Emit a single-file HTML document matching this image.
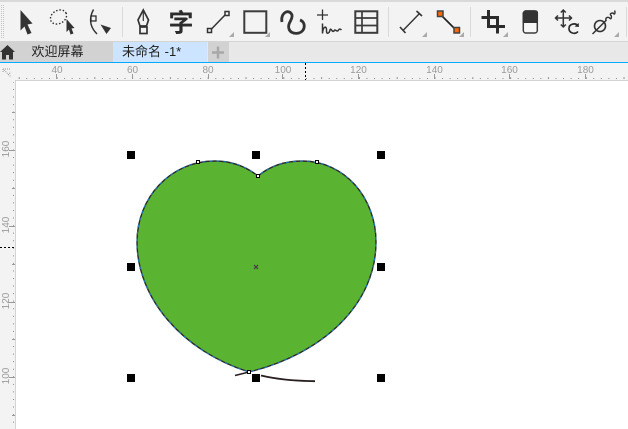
<!DOCTYPE html>
<html><head><meta charset="utf-8"><style>
html,body{margin:0;padding:0;background:#fff;width:628px;height:429px;overflow:hidden}
svg{display:block}
.r{font:10px "Liberation Sans",sans-serif;fill:#9a9a9a}
.t{font:13px "Liberation Sans","Noto Sans CJK SC",sans-serif;fill:#222}
</style></head><body>
<svg width="628" height="429" viewBox="0 0 628 429" xmlns="http://www.w3.org/2000/svg">
<rect width="628" height="429" fill="#fff"/>
<!-- toolbar -->
<rect width="628" height="42" fill="#f3f3f3"/>
<rect y="0" width="628" height="2" fill="#d9d9d9"/>
<rect y="41" width="628" height="1" fill="#d4d4d4"/>
<line x1="1.5" y1="5" x2="1.5" y2="38" stroke="#c4c4c4" stroke-dasharray="1 1"/>
<line x1="3.5" y1="5" x2="3.5" y2="38" stroke="#c4c4c4" stroke-dasharray="1 1"/>
<g fill="#dadada"><rect x="122" y="7" width="1" height="30"/><rect x="388" y="7" width="1" height="30"/><rect x="470" y="7" width="1" height="30"/><rect x="626" y="7" width="1" height="30"/></g>
<!-- pick -->
<path d="M20.500 10 L32.500 23.500 L27.500 24.500 L31.500 33 L27.500 34.500 L24.500 26.500 L20.500 30.500Z" fill="#333"/>
<!-- freehand pick -->
<ellipse cx="58.500" cy="17" rx="8.500" ry="6.500" transform="rotate(-30 58.500 17)" fill="none" stroke="#333" stroke-width="1.400" stroke-dasharray="1.500 1.800"/>
<path d="M66.500 19 L74.500 28 L71.500 28.500 L73.500 33.500 L70.500 34.500 L69 29.500 L66.500 32Z" fill="#333"/>
<!-- shape -->
<path d="M93.500 9.500 C91 14 90 19 91 24 C92 28 94 31 97 34" fill="none" stroke="#333" stroke-width="1.500"/>
<rect x="91" y="16" width="5" height="5" fill="#f3f3f3" stroke="#222" stroke-width="1.200"/>
<path d="M100.500 24.500 L111 28 L106.500 34Z" fill="#333"/>
<!-- pen -->
<path d="M143.300 10 L148.500 20 L146.500 26 L140 26 L138 20Z" fill="#f3f3f3" stroke="#333" stroke-width="1.700"/>
<line x1="143.300" y1="12" x2="143.300" y2="21" stroke="#333" stroke-width="1.200"/>
<rect x="140" y="27" width="7" height="6.500" fill="#f3f3f3" stroke="#333" stroke-width="1.700"/>
<!-- text icon -->
<text x="168.500" y="31.500" style="font:bold 25px 'Noto Sans CJK SC','WenQuanYi Zen Hei',sans-serif" fill="#2c2c2c">字</text>
<!-- line -->
<line x1="211" y1="29.500" x2="225.500" y2="14.500" stroke="#333" stroke-width="1.500"/>
<rect x="207.500" y="28.500" width="4" height="4" fill="#f3f3f3" stroke="#333" stroke-width="1.500"/>
<rect x="225" y="11.500" width="4" height="4" fill="#f3f3f3" stroke="#333" stroke-width="1.500"/>
<!-- rect -->
<rect x="244.300" y="11.300" width="22" height="21.500" fill="none" stroke="#3c3c3c" stroke-width="2"/>
<!-- spiral -->
<path d="M282 22 C280 13 289 8 292 15 C293 20 287 23 289 29 C291 35 302 35 304 28 C305 24 303 21 300 20" fill="none" stroke="#333" stroke-width="2.800"/>
<!-- artistic -->
<path d="M322.500 9.500 V20 M317 15 H328" stroke="#333" stroke-width="1.300" fill="none"/>
<path d="M322.500 23.500 V33.500 C323 26 327 25 326.500 31 C326.500 35 329.500 33 330 30 C331 27 332 33 334 31 C335 28 337 33 338.500 30 C339.500 28.500 340.500 29 341.500 30" fill="none" stroke="#333" stroke-width="1.500"/>
<!-- table -->
<rect x="355.300" y="11.300" width="22" height="21.500" fill="none" stroke="#3c3c3c" stroke-width="2"/>
<path d="M355 18 H377 M355 25.500 H377 M362 11 V33" stroke="#3c3c3c" stroke-width="1.700"/>
<!-- dimension -->
<path d="M403 30.500 L419.500 13.500" stroke="#333" stroke-width="1.400"/>
<path d="M400 27 L405.500 33 M416.500 11 L422 16" stroke="#333" stroke-width="1.600"/>
<!-- connector -->
<line x1="440" y1="14" x2="456" y2="30" stroke="#222" stroke-width="1.700"/>
<rect x="437.500" y="11" width="5.500" height="5.500" fill="#f60" stroke="#444" stroke-width="1.500"/>
<rect x="454" y="27.500" width="5.500" height="5.500" fill="#f60" stroke="#444" stroke-width="1.500"/>
<!-- crop -->
<path d="M488.500 10 V26.500 H505 M481.500 17.500 H497.500 V33.500" fill="none" stroke="#2c2c2c" stroke-width="3"/>
<!-- eraser -->
<rect x="523.300" y="11" width="14" height="22" rx="2.500" fill="#f6f6f6" stroke="#3c3c3c" stroke-width="1.500"/>
<path d="M522.500 23 V13 L525 10.300 H535 Q538 10.300 538 13 V23Z" fill="#333"/>
<!-- transform -->
<path d="M563.300 10 V27 M555.500 18 H571.500 M560.800 12.500 L563.300 10 L565.800 12.500 M558 15.500 L555.500 18 L558 20.500 M569 15.500 L571.500 18 L569 20.500 M560.800 24.500 L563.300 27 L565.800 24.500" fill="none" stroke="#333" stroke-width="1.500"/>
<path d="M578 25.500 C575 22.500 569 24 569 28.500 C569 33 575 35 578 31.500" fill="none" stroke="#2c2c2c" stroke-width="1.700"/>
<path d="M574.500 26.500 L578.800 27 L578.800 23Z" fill="#2c2c2c"/>
<!-- smear -->
<circle cx="600" cy="26" r="5.500" fill="none" stroke="#333" stroke-width="1.600"/>
<line x1="592.500" y1="34" x2="606.500" y2="20" stroke="#333" stroke-width="1.500"/>
<path d="M606 20.500 C605 17 609 16.500 610 18.500 C611.500 20 612 15.500 610.500 15 C609.500 13.500 613 12 614 14 C615.500 14 615 11.500 614.500 10.500" fill="none" stroke="#333" stroke-width="1.400"/>
<!-- corner triangles -->
<g fill="#aaa"><path d="M234 32 V37 H229Z"/><path d="M270 32 V37 H265Z"/><path d="M427 32 V37 H422Z"/><path d="M464 32 V37 H459Z"/><path d="M508 32 V37 H503Z"/><path d="M619 32 V37 H614Z"/></g>
<!-- tabs -->
<rect y="42" width="628" height="20" fill="#e8e8e8"/>
<rect x="0" y="42" width="15" height="20" fill="#d2d2d2"/>
<rect x="15" y="42" width="98" height="20" fill="#d2d2d2"/>
<rect x="113" y="42" width="94" height="20" fill="#cce4ff"/>
<rect x="208" y="42" width="21" height="20" fill="#d2d2d2"/>
<path d="M0 52 L7.500 45 L15 52 L13 52 V59.500 H9 V55 H6 V59.500 H2 V52Z" fill="#333"/>
<text class="t" x="31.500" y="56">欢迎屏幕</text>
<text class="t" x="122" y="56">未命名 -1*</text>
<path d="M218 46.500 V58.500 M212 52.500 H224" stroke="#a8a8a8" stroke-width="2.500"/>
<rect y="62" width="628" height="1" fill="#0af"/>
<!-- rulers -->
<rect y="63" width="628" height="18" fill="#f3f3f3"/>
<rect y="63" width="16" height="366" fill="#f3f3f3"/>
<rect x="15" y="80" width="613" height="1" fill="#d4d4d4"/>
<rect x="15" y="80" width="1" height="349" fill="#d4d4d4"/>
<path d="M3 69 H10 M3 69 V72 M4 70 L11 77 M8 75 L11 72" stroke="#999" stroke-dasharray="1 1" fill="none"/>
<g fill="#a0a0a0" text-anchor="middle">
<text class="r" x="57" y="73">40</text><text class="r" x="132.500" y="73">60</text><text class="r" x="208" y="73">80</text><text class="r" x="283" y="73">100</text><text class="r" x="358.500" y="73">120</text><text class="r" x="434.500" y="73">140</text><text class="r" x="509.500" y="73">160</text><text class="r" x="585.500" y="73">180</text>
</g>
<line x1="18.700" y1="78.500" x2="628" y2="78.500" stroke="#888" stroke-dasharray="1 6.560"/>
<line x1="18.700" y1="77.500" x2="628" y2="77.500" stroke="#999" stroke-width="1" stroke-dasharray="1 36.800"/>
<g stroke="#999"><path d="M56.500 74 V79 M132.500 74 V79 M208.500 74 V79 M282.500 74 V79 M358.500 74 V79 M434.500 74 V79 M509.500 74 V79 M585.500 74 V79"/></g>
<line x1="305.500" y1="63" x2="305.500" y2="80" stroke="#000" stroke-dasharray="2 2"/>
<line x1="13.500" y1="82" x2="13.500" y2="429" stroke="#888" stroke-dasharray="1 6.560" stroke-dashoffset="-7"/>
<g stroke="#999"><path d="M9 150.500 H15 M9 226.500 H15 M9 302.500 H15 M9 377.500 H15 M12 112.500 H15 M12 188.500 H15 M12 264.500 H15 M12 339.500 H15 M12 415.500 H15"/></g>
<line x1="0" y1="247.500" x2="14" y2="247.500" stroke="#000" stroke-dasharray="2 2"/>
<g text-anchor="middle">
<text class="r" transform="translate(9 149) rotate(-90)">160</text>
<text class="r" transform="translate(9 225) rotate(-90)">140</text>
<text class="r" transform="translate(9 301) rotate(-90)">120</text>
<text class="r" transform="translate(9 376) rotate(-90)">100</text>
</g>
<!-- heart -->
<path d="M258 176 C244 165 230 161 215 161 C170 161 137 198 137 242 C137 298 182 351 249 372 C322 354 376 305 376 242 C376 198 345 161 302 161 C285 161 270 166 258 176Z" fill="#5ab431" stroke="#2a2a2a" stroke-width="1.400"/>
<path d="M258 176 C244 165 230 161 215 161 C170 161 137 198 137 242 C137 298 182 351 249 372 C322 354 376 305 376 242 C376 198 345 161 302 161 C285 161 270 166 258 176Z" fill="none" stroke="#1a78c8" stroke-width="1" stroke-dasharray="3 4"/>
<!-- tails -->
<path d="M235 375.500 L249 372" fill="none" stroke="#2a1f1f" stroke-width="1.600"/>
<path d="M261 375.500 C280 380 298 381 315 381.200" fill="none" stroke="#2a1f1f" stroke-width="1.800"/>
<!-- handles -->
<g fill="#000">
<rect x="127" y="151" width="8" height="8"/><rect x="252" y="151" width="8" height="8"/><rect x="377" y="151" width="8" height="8"/>
<rect x="127" y="263" width="8" height="8"/><rect x="377" y="263" width="8" height="8"/>
<rect x="127" y="374" width="8" height="8"/><rect x="252" y="374" width="8" height="8"/><rect x="377" y="374" width="8" height="8"/>
</g>
<g fill="#fff" stroke="#000" stroke-width="1">
<rect x="196.500" y="160.500" width="3" height="3"/><rect x="315.500" y="160.500" width="3" height="3"/><rect x="256.500" y="174.500" width="3" height="3"/><rect x="247.500" y="370.500" width="3" height="3"/>
</g>
<path d="M254 265 L258 269 M258 265 L254 269" stroke="#444" stroke-width="1.300"/>
</svg>
</body></html>
